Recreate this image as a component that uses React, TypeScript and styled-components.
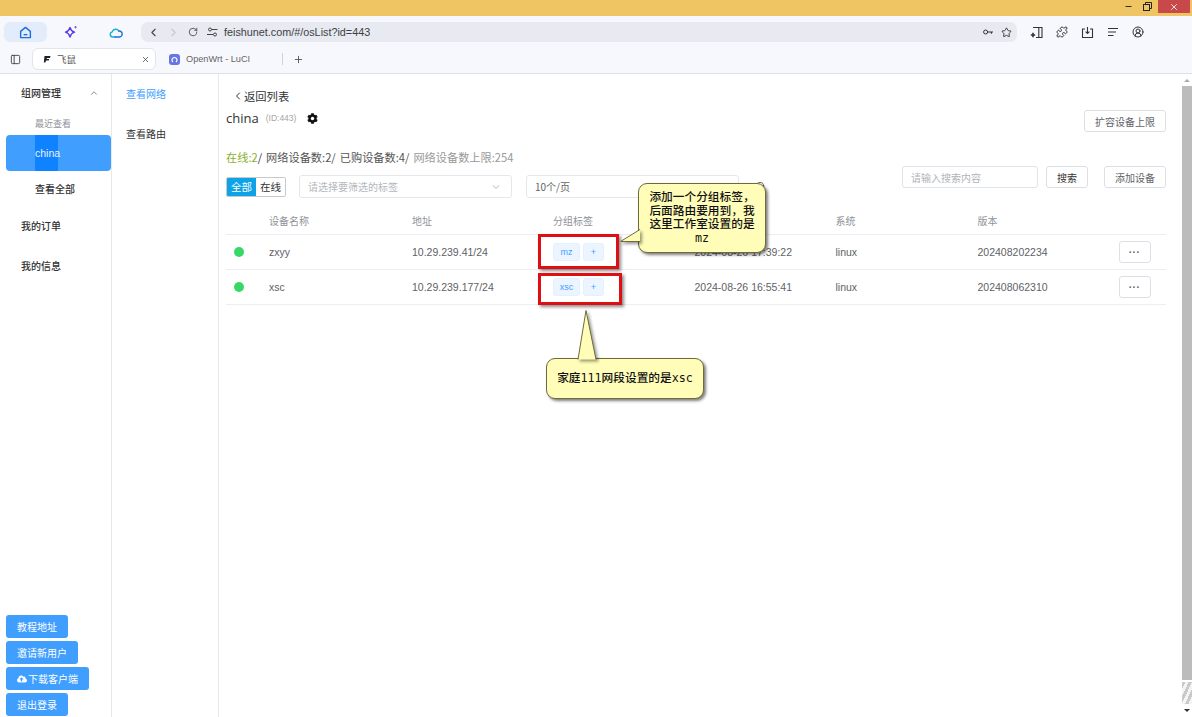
import styled, { createGlobalStyle } from "styled-components";
import { FaCloudUploadAlt, FaCog } from "react-icons/fa";
import {
    ChevronDown,
    ChevronLeft,
    ChevronRight,
    ChevronUp,
    CircleUserRound,
    Minus,
    PanelLeft,
    Plus,
    Puzzle,
    RotateCw,
    Search,
    Star,
    X,
} from "lucide-react";

const CN = `"Noto Sans CJK SC", "Liberation Sans", sans-serif`;

const GlobalStyle = createGlobalStyle`
    html, body {
        margin: 0;
        padding: 0;
        overflow: hidden;
        background: #fff;
        font-family: ${CN};
    }
    * {
        box-sizing: border-box;
    }
`;

const Page = styled.div`
    position: relative;
    width: 1192px;
    height: 717px;
    overflow: hidden;
    display: flex;
    flex-direction: column;
`;

const TitleBar = styled.div`
    height: 16px;
    flex-shrink: 0;
    background: #efc564;
    display: flex;
    justify-content: flex-end;
    align-items: flex-start;
`;

const WindowBtn = styled.div<{ close?: boolean }>`
    width: ${props => props.close ? "32px" : "19px"};
    height: 13px;
    margin-left: ${props => props.close ? "1px" : "0"};
    margin-right: ${props => props.close ? "2px" : "0"};
    background: ${props => props.close ? "#c8494a" : "transparent"};
    color: ${props => props.close ? "#fff" : "#222"};
    display: flex;
    align-items: center;
    justify-content: center;
`;

const Toolbar = styled.div`
    height: 29px;
    flex-shrink: 0;
    background: #f6f8fd;
    display: flex;
    align-items: center;
    padding: 3px 0 0 4px;
`;

const ToolTab = styled.div<{ active?: boolean }>`
    width: 43px;
    height: 20px;
    flex-shrink: 0;
    margin-right: 2px;
    border-radius: 6px;
    background: ${props => props.active ? "#e3ecfa" : "transparent"};
    display: flex;
    align-items: center;
    justify-content: center;
`;

const Omnibox = styled.div`
    width: 876px;
    height: 20px;
    flex-shrink: 0;
    margin-left: 2px;
    background: #e7eaf0;
    border-radius: 7px;
    display: flex;
    align-items: center;
    padding: 0 2px 0 3px;
`;

const UrlText = styled.span`
    font-family: "Liberation Sans", sans-serif;
    font-size: 10.8px;
    color: #3d3f44;
    margin-left: 2px;
    flex: 1;
`;

const NavSlot = styled.div`
    width: 19.5px;
    display: flex;
    justify-content: center;
`;

const OmniIcon = styled.div`
    width: 18px;
    display: flex;
    justify-content: center;
    color: #333;
`;

const ExtGroup = styled.div`
    display: flex;
    align-items: center;
    margin-left: 10px;
    gap: 7.5px;
    color: #333;
`;

const ExtIcon = styled.div`
    width: 18px;
    display: flex;
    justify-content: center;
`;

const TabRow = styled.div`
    height: 29px;
    flex-shrink: 0;
    background: #f6f8fd;
    border-bottom: 1px solid #dfe1e6;
    display: flex;
    align-items: center;
    padding-left: 10px;
`;

const BrowserTab = styled.div<{ active?: boolean }>`
    width: ${props => props.active ? "124px" : "126px"};
    height: 22px;
    margin-left: ${props => props.active ? "11px" : "0"};
    padding-left: ${props => props.active ? "10px" : "12px"};
    padding-right: 5px;
    background: ${props => props.active ? "#fff" : "transparent"};
    border: 1px solid ${props => props.active ? "#e2e5ea" : "transparent"};
    border-radius: 6px;
    display: flex;
    align-items: center;
    font-size: 9.5px;
    color: #555;
`;

const TabLabel = styled.span`
    flex: 1;
    margin-left: 6px;
    font-size: 9.5px;
`;

const TabLabelLatin = styled(TabLabel)`
    font-family: "Liberation Sans", sans-serif;
    font-size: 9.2px;
    color: #666;
`;

const TabDivider = styled.div`
    width: 1px;
    height: 12px;
    background: #cfd2d8;
    margin-right: 10px;
`;

const Favicon = styled.div`
    width: 11px;
    height: 11px;
    border-radius: 3px;
    background: #6675e0;
    display: flex;
    align-items: center;
    justify-content: center;
`;

const Body = styled.div`
    flex: 1;
    display: flex;
    min-height: 0;
`;

const Sidebar = styled.aside`
    width: 112px;
    border-right: 1px solid #e7e8ea;
    padding: 0 0 1px 6px;
    display: flex;
    flex-direction: column;
    font-size: 10px;
    color: #303133;
`;

const SideHead = styled.div`
    height: 38px;
    padding: 0 12px 1px 15px;
    display: flex;
    align-items: center;
    justify-content: space-between;
    font-weight: 500;
`;

const SideItem = styled.div`
    height: 40px;
    padding: 0 0 1px 15px;
    display: flex;
    align-items: center;
    font-weight: 500;
`;

const RecentLabel = styled.div`
    height: 23px;
    padding-left: 29px;
    font-size: 9px;
    color: #909399;
    display: flex;
    align-items: center;
`;

const ActiveItem = styled.div`
    width: 105px;
    height: 36px;
    background: #409eff;
    border-radius: 4px;
    padding-left: 29px;
    display: flex;
`;

const ActiveLabel = styled.span`
    width: 23px;
    height: 100%;
    background: #0f82ff;
    color: #e9f3ff;
    font-family: "Liberation Sans", sans-serif;
    font-size: 10.5px;
    display: flex;
    align-items: center;
`;

const SubItem = styled.div`
    height: 35px;
    padding: 0 0 1px 29px;
    display: flex;
    align-items: center;
    font-weight: 500;
`;

const SideActions = styled.div`
    margin-top: auto;
    display: flex;
    flex-direction: column;
    align-items: flex-start;
    gap: 3px;
`;

const BlueButton = styled.div`
    height: 23px;
    padding: 0 11px;
    background: #409eff;
    border-radius: 3px;
    color: #fff;
    font-size: 10px;
    display: flex;
    align-items: center;
    gap: 1px;
`;

const SubNav = styled.nav`
    width: 107px;
    border-right: 1px solid #e7e8ea;
    padding-left: 14px;
    font-size: 10px;
    color: #303133;
`;

const SubNavItem = styled.div<{ active?: boolean }>`
    height: 40px;
    padding-bottom: 2px;
    display: flex;
    align-items: center;
    color: ${props => props.active ? "#409eff" : "#303133"};
`;

const Main = styled.main`
    flex: 1;
    min-width: 0;
    padding: 0 16px 0 7px;
`;

const TopRow = styled.div`
    display: flex;
    justify-content: space-between;
    align-items: flex-start;
    height: 64px;
`;

const BackLink = styled.div`
    height: 18px;
    margin-top: 13px;
    padding-left: 6px;
    display: flex;
    align-items: center;
    font-size: 11.3px;
    color: #303133;
`;

const TitleLine = styled.div`
    display: flex;
    align-items: center;
    height: 20px;
    margin-top: 3px;
`;

const Title = styled.h1`
    margin: 0;
    font-family: "Open Sans", sans-serif;
    font-size: 13px;
    font-weight: 400;
    color: #303133;
`;

const IdText = styled.span`
    margin: 0 11px 0 7px;
    font-family: "Liberation Sans", sans-serif;
    font-size: 8.5px;
    color: #a6a6a6;
`;

const OutlineButton = styled.div<{ dark?: boolean }>`
    height: 22px;
    padding: 0 10px;
    background: #fff;
    border: 1px solid #dcdfe6;
    border-radius: 3px;
    font-size: 10px;
    color: ${props => props.dark ? "#333" : "#606266"};
    display: flex;
    align-items: center;
    justify-content: center;
`;

const ExpandButton = styled(OutlineButton)`
    margin-top: 36px;
`;

const Stats = styled.div`
    margin-top: 11px;
    height: 16px;
    display: flex;
    align-items: center;
    font-size: 11.2px;
`;

const Stat = styled.span<{ color: string }>`
    color: ${props => props.color};
    margin-right: 4px;
`;

const StatSlash = styled.span`
    color: #333;
`;

const FilterRow = styled.div`
    height: 40px;
    margin-top: 1px;
    display: flex;
    align-items: flex-start;
`;

const FilterLeft = styled.div`
    margin-top: 9px;
    display: flex;
    align-items: center;
`;

const Segment = styled.div`
    display: flex;
    height: 20px;
    border-radius: 2px;
    overflow: hidden;
    border: 1px solid #c9c9c9;
    font-size: 10.5px;
    margin-right: 13px;
`;

const SegmentItem = styled.div<{ active?: boolean }>`
    width: 29px;
    background: ${props => props.active ? "#0ea2e6" : "#fff"};
    color: ${props => props.active ? "#fff" : "#333"};
    display: flex;
    align-items: center;
    justify-content: center;
`;

const SelectBox = styled.div`
    width: 213px;
    height: 23px;
    margin-right: 14px;
    padding: 0 9px 0 8px;
    border: 1px solid #e4e7ed;
    border-radius: 3px;
    background: #fff;
    display: flex;
    align-items: center;
    justify-content: space-between;
    font-size: 10px;
    color: #b4b7bd;
`;

const PerPage = styled.span`
    color: #606266;
    font-size: 10px;
`;

const FilterIcon = styled.div`
    margin-left: 2px;
    display: flex;
    color: #555;
`;

const SearchGroup = styled.div`
    margin-left: auto;
    display: flex;
    align-items: center;
`;

const SearchInput = styled.div`
    width: 136px;
    height: 22px;
    margin-right: 8px;
    padding-left: 8px;
    border: 1px solid #e0e3e9;
    border-radius: 3px;
    font-size: 10px;
    color: #b0b3b9;
    display: flex;
    align-items: center;
`;

const SearchBtn = styled(OutlineButton)`
    width: 42px;
    padding: 0;
    margin-right: 16px;
`;

const Row = styled.div<{ head?: boolean }>`
    display: grid;
    grid-template-columns: 43px 143px 141px 141.5px 141px 142px 141px 1fr;
    align-items: center;
    height: ${props => props.head ? "29px" : "35px"};
    border-bottom: 1px solid #ebeef5;
    font-size: 10.5px;
    color: ${props => props.head ? "#909399" : "#606266"};
    font-family: "Liberation Sans", "Noto Sans CJK SC", sans-serif;
`;

const Dot = styled.span`
    width: 10px;
    height: 10px;
    margin-left: 8px;
    border-radius: 50%;
    background: #36d966;
`;

const Head = styled.span`
    font-family: ${CN};
    font-size: 10px;
`;

const TagCell = styled.div`
    display: flex;
    gap: 3px;
`;

const Tag = styled.span<{ wide?: boolean }>`
    width: ${props => props.wide ? "27px" : "21px"};
    height: 18px;
    border: 1px solid #e3f0fd;
    border-radius: 3px;
    background: #ecf5ff;
    color: #409eff;
    font-size: 9px;
    display: flex;
    align-items: center;
    justify-content: center;
`;

const ActionCell = styled.div`
    display: flex;
    justify-content: flex-end;
    padding-right: 15.5px;
`;

const MoreBtn = styled.div`
    width: 32px;
    height: 22px;
    flex-shrink: 0;
    border: 1px solid #dcdfe6;
    border-radius: 3px;
    color: #606266;
    font-size: 10px;
    font-weight: 700;
    letter-spacing: 0.5px;
    display: flex;
    align-items: center;
    justify-content: center;
`;

const Scrollbar = styled.div`
    width: 10px;
    display: flex;
    flex-direction: column;
    align-items: stretch;
`;

const ScrollArrow = styled.div<{ down?: boolean }>`
    height: ${props => props.down ? "13px" : "12px"};
    display: flex;
    align-items: center;
    justify-content: center;
    &::before {
        content: "";
        border-left: 3px solid transparent;
        border-right: 3px solid transparent;
        border-top: ${props => props.down ? "3px solid #333" : "none"};
        border-bottom: ${props => props.down ? "none" : "3px solid #aaa"};
    }
`;

const ScrollThumb = styled.div`
    flex: 1;
    background: #bcbcbc;
`;

const ScrollTail = styled.div`
    height: 22px;
    margin-top: 2px;
    background: repeating-linear-gradient(115deg, #c9c9c9 0 3px, #f4f4f4 3px 6px);
`;

const RedBox = styled.div<{ $left: number; $top: number; $width: number; $height: number }>`
    position: absolute;
    left: ${props => props.$left}px;
    top: ${props => props.$top}px;
    width: ${props => props.$width}px;
    height: ${props => props.$height}px;
    border: 3px solid #de0f13;
    box-shadow: 2px 2px 3px rgba(0, 0, 0, 0.45);
`;

const CalloutBox = styled.div<{ $left: number; $top: number; $width: number; $height: number }>`
    position: absolute;
    left: ${props => props.$left}px;
    top: ${props => props.$top}px;
    width: ${props => props.$width}px;
    height: ${props => props.$height}px;
    background: #fffdb8;
    border: 1px solid #6f6a3c;
    border-radius: 9px;
    box-shadow: 2px 2px 3px rgba(0, 0, 0, 0.5);
    color: #111;
    font-family: "DejaVu Sans Mono", "Noto Sans CJK SC", monospace;
    font-size: 11.7px;
    font-weight: 500;
    line-height: 13.5px;
    text-align: center;
    white-space: nowrap;
    display: flex;
    align-items: center;
    justify-content: center;
`;

const Pointer = styled.svg<{ $left: number; $top: number }>`
    position: absolute;
    left: ${props => props.$left}px;
    top: ${props => props.$top}px;
    overflow: visible;
    filter: drop-shadow(2px 2px 1.5px rgba(0, 0, 0, 0.4));
`;

const columns = ["设备名称", "地址", "分组标签", "", "系统", "版本"];

const devices = [
    { name: "zxyy", address: "10.29.239.41/24", tag: "mz", time: "2024-08-26 17:39:22", version: "202408202234" },
    { name: "xsc", address: "10.29.239.177/24", tag: "xsc", time: "2024-08-26 16:55:41", version: "202408062310" },
];

function HomeIcon() {
    return (
        <svg width="13" height="13" viewBox="0 0 12 12" fill="none" stroke="#1d6fe0" strokeWidth="1.3" strokeLinejoin="round">
            <path d="M1.5 5L6 1.3 10.5 5v5.7h-9z" />
            <path d="M4.3 8h3.4" />
        </svg>
    );
}

function SparkIcon() {
    return (
        <svg width="14" height="14" viewBox="0 0 14 14" fill="none" stroke="#5a3be0" strokeWidth="1.4" strokeLinejoin="round">
            <path d="M6 2.5C6.6 5 7.6 6.4 10.5 7.2 7.6 8 6.6 9.4 6 12 5.4 9.4 4.4 8 1.5 7.2 4.4 6.4 5.4 5 6 2.5Z" />
            <path d="M11.5 1v2.4M10.3 2.2h2.4" strokeWidth="1" stroke="#8a4fe8" />
        </svg>
    );
}

function CloudIcon() {
    return (
        <svg width="14" height="13" viewBox="0 0 14 13" fill="none" strokeWidth="1.4" strokeLinecap="round">
            <path d="M6 11H3.6A2.6 2.6 0 0 1 3.2 5.9 3.6 3.6 0 0 1 9.8 5" stroke="#17b3c4" />
            <path d="M9.8 5A3 3 0 0 1 10.5 11H6" stroke="#1d6fe0" />
        </svg>
    );
}

function TuneIcon() {
    return (
        <svg width="11" height="10" viewBox="0 0 11 10" fill="none" stroke="#444" strokeWidth="1">
            <circle cx="3" cy="2.5" r="1.5" />
            <path d="M4.5 2.5H10.5M0 7.5h6" />
            <circle cx="8" cy="7.5" r="1.5" />
        </svg>
    );
}

function PasswordKey() {
    return (
        <svg width="10" height="8" viewBox="0 0 10 8" fill="none" stroke="currentColor" strokeWidth="1">
            <circle cx="2.6" cy="4" r="2" />
            <path d="M4.6 4H10M8.4 4v1.8" />
        </svg>
    );
}

function SidePanelAdd() {
    return (
        <svg width="13" height="13" viewBox="0 0 13 13" fill="none" stroke="currentColor" strokeWidth="1.1">
            <path d="M3 1.5h9v10H6" />
            <path d="M8.8 1.5v10" />
            <path d="M3 6.8v4.4M.8 9h4.4" strokeWidth="1.6" />
        </svg>
    );
}

function DownloadTray() {
    return (
        <svg width="13" height="13" viewBox="0 0 13 13" fill="none" stroke="currentColor" strokeWidth="1.1">
            <path d="M4 3H1.5v8.5h10V3H9" />
            <path d="M6.5 1v6.4M4.6 5.6l1.9 1.9 1.9-1.9" />
        </svg>
    );
}

function ReadingList() {
    return (
        <svg width="12" height="10" viewBox="0 0 12 10" fill="none" stroke="currentColor" strokeWidth="1.1">
            <path d="M1 1.5h10M1 5h8M1 8.5h5.5" />
        </svg>
    );
}

export default function App() {
    return (
        <Page>
            <GlobalStyle />
            <TitleBar>
                <WindowBtn><Minus size={9} strokeWidth={2.5} /></WindowBtn>
                <WindowBtn>
                    <svg width="9" height="9" viewBox="0 0 9 9" fill="none" stroke="currentColor">
                        <rect x="0.5" y="2.5" width="6" height="6" />
                        <path d="M2.5 2.5v-2h6v6h-2" />
                    </svg>
                </WindowBtn>
                <WindowBtn close><X size={10} strokeWidth={2} /></WindowBtn>
            </TitleBar>

            <Toolbar>
                <ToolTab active><HomeIcon /></ToolTab>
                <ToolTab><SparkIcon /></ToolTab>
                <ToolTab><CloudIcon /></ToolTab>
                <Omnibox>
                    <NavSlot><ChevronLeft size={13} color="#444" /></NavSlot>
                    <NavSlot><ChevronRight size={13} color="#c4c7cc" /></NavSlot>
                    <NavSlot><RotateCw size={10} color="#444" /></NavSlot>
                    <NavSlot><TuneIcon /></NavSlot>
                    <UrlText>feishunet.com/#/osList?id=443</UrlText>
                    <OmniIcon><PasswordKey /></OmniIcon>
                    <OmniIcon><Star size={11} /></OmniIcon>
                </Omnibox>
                <ExtGroup>
                    <ExtIcon><SidePanelAdd /></ExtIcon>
                    <ExtIcon><Puzzle size={12} /></ExtIcon>
                    <ExtIcon><DownloadTray /></ExtIcon>
                    <ExtIcon><ReadingList /></ExtIcon>
                    <ExtIcon><CircleUserRound size={12} /></ExtIcon>
                </ExtGroup>
            </Toolbar>

            <TabRow>
                <PanelLeft size={11} color="#444" />
                <BrowserTab active>
                    <svg width="8" height="8" viewBox="0 0 8 8" fill="#222">
                        <path d="M1.5 1h6L7 3H4L3.6 4h2.6l-.4 1.5H3.2L2.2 7.5H.8z" />
                    </svg>
                    <TabLabel>飞鼠</TabLabel>
                    <X size={9} color="#444" />
                </BrowserTab>
                <BrowserTab>
                    <Favicon>
                        <svg width="7" height="7" viewBox="0 0 7 7" fill="none" stroke="#fff" strokeWidth="1.2">
                            <path d="M2 6a2.5 2.5 0 1 1 3 0" />
                        </svg>
                    </Favicon>
                    <TabLabelLatin>OpenWrt - LuCI</TabLabelLatin>
                </BrowserTab>
                <TabDivider />
                <Plus size={11} color="#555" />
            </TabRow>

            <Body>
                <Sidebar>
                    <SideHead>组网管理<ChevronUp size={10} color="#777" /></SideHead>
                    <RecentLabel>最近查看</RecentLabel>
                    <ActiveItem><ActiveLabel>china</ActiveLabel></ActiveItem>
                    <SubItem>查看全部</SubItem>
                    <SideItem>我的订单</SideItem>
                    <SideItem>我的信息</SideItem>
                    <SideActions>
                        <BlueButton>教程地址</BlueButton>
                        <BlueButton>邀请新用户</BlueButton>
                        <BlueButton><FaCloudUploadAlt size={10} />下载客户端</BlueButton>
                        <BlueButton>退出登录</BlueButton>
                    </SideActions>
                </Sidebar>

                <SubNav>
                    <SubNavItem active>查看网络</SubNavItem>
                    <SubNavItem>查看路由</SubNavItem>
                </SubNav>

                <Main>
                    <TopRow>
                        <div>
                            <BackLink><ChevronLeft size={12} />返回列表</BackLink>
                            <TitleLine>
                                <Title>china</Title>
                                <IdText>(ID:443)</IdText>
                                <FaCog size={11} color="#111" />
                            </TitleLine>
                        </div>
                        <ExpandButton>扩容设备上限</ExpandButton>
                    </TopRow>

                    <Stats>
                        <Stat color="#8ab02e">在线:2<StatSlash>/</StatSlash></Stat>
                        <Stat color="#555">网络设备数:2/</Stat>
                        <Stat color="#555">已购设备数:4/</Stat>
                        <Stat color="#999">网络设备数上限:254</Stat>
                    </Stats>

                    <FilterRow>
                        <FilterLeft>
                            <Segment>
                                <SegmentItem active>全部</SegmentItem>
                                <SegmentItem>在线</SegmentItem>
                            </Segment>
                            <SelectBox>请选择要筛选的标签<ChevronDown size={12} color="#b4b7bd" /></SelectBox>
                            <SelectBox><PerPage>10个/页</PerPage></SelectBox>
                            <FilterIcon><Search size={11} /></FilterIcon>
                        </FilterLeft>
                        <SearchGroup>
                            <SearchInput>请输入搜索内容</SearchInput>
                            <SearchBtn dark>搜索</SearchBtn>
                            <OutlineButton>添加设备</OutlineButton>
                        </SearchGroup>
                    </FilterRow>

                    <Row head>
                        <span />
                        {columns.map((c, i) => <Head key={i}>{c}</Head>)}
                        <span />
                    </Row>
                    {devices.map(d => (
                        <Row key={d.name}>
                            <Dot />
                            <span>{d.name}</span>
                            <span>{d.address}</span>
                            <TagCell>
                                <Tag wide>{d.tag}</Tag>
                                <Tag>+</Tag>
                            </TagCell>
                            <span>{d.time}</span>
                            <span>linux</span>
                            <span>{d.version}</span>
                            <ActionCell><MoreBtn>···</MoreBtn></ActionCell>
                        </Row>
                    ))}
                </Main>

                <Scrollbar>
                    <ScrollArrow />
                    <ScrollThumb />
                    <ScrollTail />
                    <ScrollArrow down />
                </Scrollbar>
            </Body>

            <RedBox $left={538} $top={234} $width={81} $height={35} />
            <RedBox $left={538} $top={273} $width={84} $height={32} />

            <CalloutBox $left={638} $top={183} $width={128} $height={70}>
                <div>添加一个分组标签，<br />后面路由要用到，我<br />这里工作室设置的是<br />mz</div>
            </CalloutBox>
            <Pointer $left={620} $top={229} width="21" height="13" viewBox="0 0 21 13">
                <path d="M20 0.5L0.5 12.5H20" fill="#fffdb8" stroke="#6f6a3c" />
            </Pointer>

            <CalloutBox $left={546} $top={358} $width={158} $height={41}>
                家庭111网段设置的是xsc
            </CalloutBox>
            <Pointer $left={577} $top={310} width="20" height="50" viewBox="0 0 20 50">
                <path d="M1 49.5L9 0.5L19 49.5" fill="#fffdb8" stroke="#6f6a3c" />
            </Pointer>
        </Page>
    );
}
